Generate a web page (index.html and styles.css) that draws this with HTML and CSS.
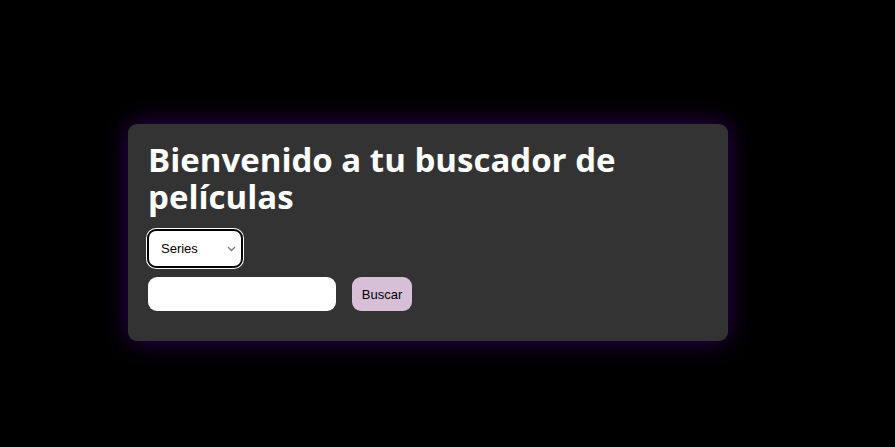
FILE: index.html
```html
<!DOCTYPE html>
<html lang="es">
<head>
<meta charset="utf-8">
<link rel="stylesheet" href="styles.css">
</head>
<body>
<main class="page">
  <section class="card">
    <h1 class="title">Bienvenido a tu buscador de películas</h1>
    <div class="select-row">
      <div class="select-box">
        <span class="select-text">Series</span>
        <svg class="chev" width="9" height="6" viewBox="0 0 9 6"><path d="M1 1 L4.5 4.5 L8 1" fill="none" stroke="#777" stroke-width="1.3"/></svg>
      </div>
    </div>
    <div class="search-row">
      <div class="search-input"></div>
      <button class="search-btn">Buscar</button>
    </div>
  </section>
</main>
</body>
</html>
```
FILE: styles.css
```css
html, body {
  margin: 0;
  padding: 0;
  background: #000;
  width: 100%;
  height: 100%;
  overflow: hidden;
}
.page {
  padding: 124px 0 0 128px;
}
.card {
  width: 600px;
  height: 217px;
  box-sizing: border-box;
  background: #333333;
  border-radius: 9px;
  padding: 17px 20px 20px 20px;
  box-shadow: 0 0 24px rgba(60, 0, 110, 0.8);
}
.title {
  margin: 0;
  font-family: "Open Sans", sans-serif;
  font-weight: 700;
  font-size: 33px;
  line-height: 37px;
  color: #fff;
}
.select-row {
  margin-top: 14px;
  display: flex;
}
.select-box {
  width: 96px;
  height: 39px;
  box-sizing: border-box;
  background: #fff;
  border: 2px solid #000;
  border-radius: 9px;
  box-shadow: 0 0 0 1px #fff;
  display: flex;
  align-items: center;
  justify-content: space-between;
  padding: 0 5px 0 12px;
  margin-left: -1px;
}
.select-text {
  font-family: "Liberation Sans", Arial, sans-serif;
  font-size: 13px;
  color: #000;
}
.search-row {
  margin-top: 9px;
  display: flex;
  gap: 16px;
}
.search-input {
  width: 188px;
  height: 34px;
  background: #fff;
  border-radius: 9px;
}
.search-btn {
  width: 60px;
  height: 34px;
  border: none;
  border-radius: 9px;
  background: #d8bfd8;
  font-family: "Liberation Sans", Arial, sans-serif;
  font-size: 13px;
  color: #000;
  padding: 0;
}
```
